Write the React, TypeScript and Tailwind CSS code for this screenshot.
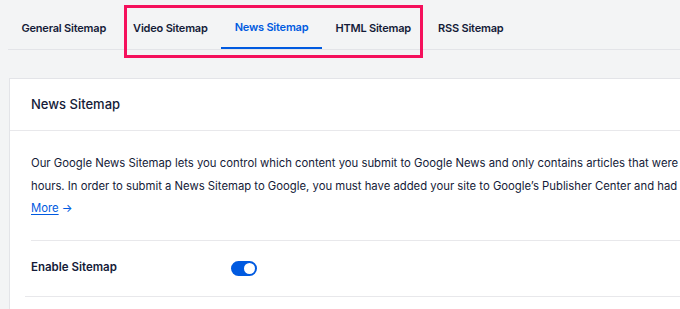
const tabs = ['General Sitemap', 'Video Sitemap', 'News Sitemap', 'HTML Sitemap', 'RSS Sitemap'];

export default function App() {
  return (
    <div className="h-[309px] w-[680px] overflow-hidden bg-[#f3f4f5] font-['Inter',sans-serif] text-[#141b38]">
      {/* Tabs */}
      <div className="relative ml-2 flex h-[50px] border-b border-[#e3e4e8]">
        {tabs.map((t) => (
          <div
            key={t}
            className={`flex h-full items-center px-[13.5px] pt-[8px] text-[11px] font-semibold tracking-[-0.2px] ${
              t === 'News Sitemap' ? '-mb-px border-b-2 border-[#005ae0] text-[#005ae0]' : ''
            }`}
          >
            {t}
          </div>
        ))}
        {/* highlight box */}
        <div className="absolute left-[116px] top-[5px] h-[53px] w-[299px] border-[3px] border-[#f5105c]" />
      </div>

      {/* Card */}
      <div className="ml-[9px] mt-[28px] w-[700px] border border-[#e3e4e8] bg-white pb-[40px]">
        <div className="flex h-[52px] items-center border-b border-[#e8e8eb] px-[21px] text-[13px] font-medium">
          News Sitemap
        </div>
        <div className="px-[21px] pt-[21px]">
          <p className="whitespace-nowrap text-[11.3px] leading-[22.5px]">
            Our Google News Sitemap lets you control which content you submit to Google News and only contains articles that were published in the last 48
            <br />
            hours. In order to submit a News Sitemap to Google, you must have added your site to Google’s Publisher Center and had it approved by Google. Learn
            <br />
            <span className="text-[#005ae0] underline underline-offset-2">More</span>
            <span className="text-[#005ae0]"> →</span>
          </p>
          <div className="mt-[20px] flex h-[56px] items-center border-t border-[#e8e8eb]">
            <div className="w-[200px] text-[11.5px] font-semibold">Enable Sitemap</div>
            <div className="flex h-[15px] w-[26px] items-center justify-end rounded-full bg-[#005ae0] px-[2px]">
              <div className="h-[11px] w-[11px] rounded-full bg-white" />
            </div>
          </div>
        </div>
        <div className="ml-[15px] border-t border-[#e8e8eb]" />
      </div>
    </div>
  );
}
